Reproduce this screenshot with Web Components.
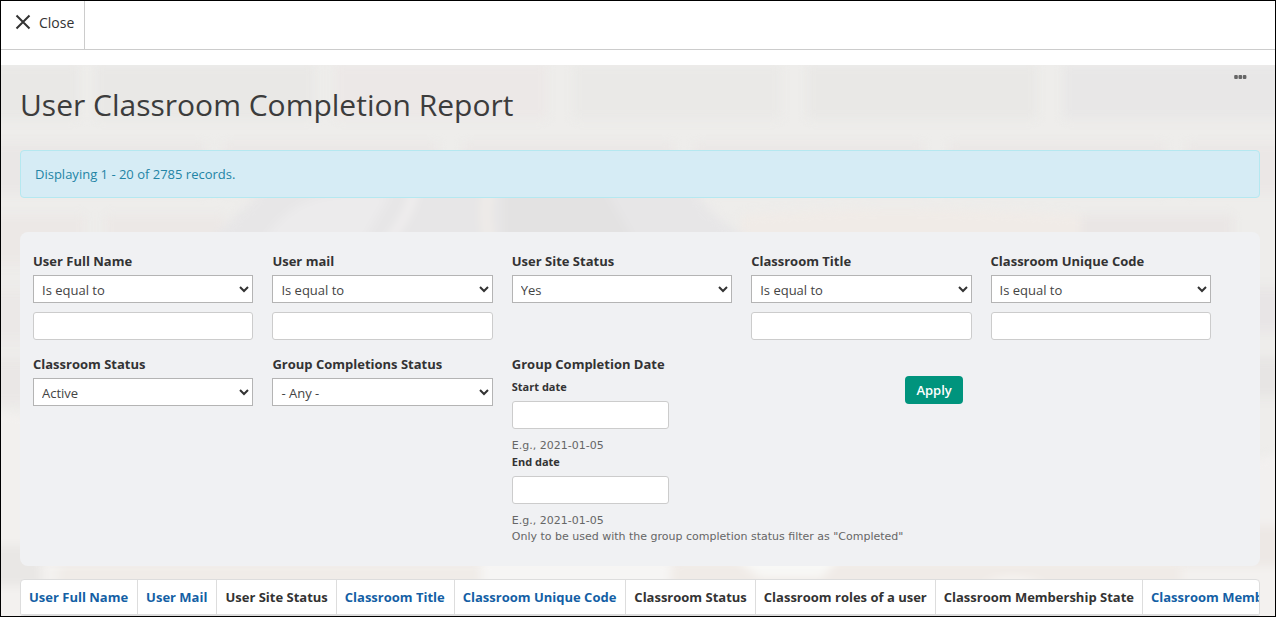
<!DOCTYPE html>
<html lang="en">
<head>
<meta charset="utf-8">
<title>User Classroom Completion Report</title>
<style>
    * { box-sizing: border-box; }

    body {
        margin: 0;
        min-height: 100vh;
        font: 13px/20px "Open Sans", "Liberation Sans", sans-serif;
        color: #333;
        background: #fff;
    }
</style>
</head>
<body>

<report-page>
    <close-bar slot="top"></close-bar>
    <report-menu slot="menu"></report-menu>
    <report-title>User Classroom Completion Report</report-title>
    <info-message>Displaying 1 - 20 of 2785 records.</info-message>
    <filter-panel>
        <filter-field label="User Full Name" options="Is equal to|Contains" text></filter-field>
        <filter-field label="User mail" options="Is equal to|Contains" text></filter-field>
        <filter-field label="User Site Status" options="Yes|No"></filter-field>
        <filter-field label="Classroom Title" options="Is equal to|Contains" text></filter-field>
        <filter-field label="Classroom Unique Code" options="Is equal to|Contains" text></filter-field>
        <filter-field label="Classroom Status" options="Active|Archived"></filter-field>
        <filter-field label="Group Completions Status" options="- Any -|Completed"></filter-field>
        <date-range label="Group Completion Date">Only to be used with the group completion status filter as "Completed"</date-range>
        <apply-button>Apply</apply-button>
    </filter-panel>
    <report-table></report-table>
</report-page>

<script>
// Base for all the elements: puts the markup in an open shadow root.
class BaseElement extends HTMLElement {
    constructor() {
        super();
        this.shadow = this.attachShadow({mode: 'open'});
    }

    connectedCallback() {
        this.shadow.innerHTML = `<style>* { box-sizing: border-box; }</style>` + this.render();
    }
}

// Page frame, with the faded photo behind the report.
class ReportPage extends BaseElement {
    render() {
        return `
        <style>
            :host {
                display: flex;
                flex-direction: column;
                height: 100vh;
                overflow: hidden;
                border: 1px solid #000;
            }

            main {
                position: relative;
                flex: 1;
                min-height: 0;
                margin-top: 15px;
                padding: 19px 15px 0 19px;
                overflow: hidden;
                background: #eeedeb;
                isolation: isolate;
            }

            .backdrop {
                position: absolute;
                inset: 0;
                width: 100%;
                height: 100%;
                z-index: -1;
            }

            .menu {
                position: absolute;
                top: 5px;
                right: 28px;
            }
        </style>
        <slot name="top"></slot>
        <main>
            <svg class="backdrop" viewBox="0 0 1274 550" preserveAspectRatio="none" aria-hidden="true">
                <defs>
                    <filter id="soft" x="-10%" y="-10%" width="120%" height="120%" color-interpolation-filters="sRGB">
                        <feGaussianBlur stdDeviation="5"/>
                    </filter>
                </defs>
                <g filter="url(#soft)">
                    <g fill="#e9e8e6">
                        <rect x="-20" y="0" width="98" height="54"/>
                        <rect x="94" y="0" width="220" height="54"/>
                        <rect x="334" y="0" width="212" height="54" fill="#ece8e7"/>
                        <rect x="572" y="0" width="208" height="54" fill="#eae9e7"/>
                        <rect x="806" y="0" width="230" height="54"/>
                        <rect x="1062" y="0" width="230" height="54" fill="#e8e7e7"/>
                        <rect x="-20" y="78" width="225" height="50" fill="#eae7e6"/>
                        <rect x="222" y="78" width="215" height="50" fill="#ebe7e6"/>
                        <rect x="462" y="78" width="210" height="50" fill="#ebe7e6"/>
                        <rect x="694" y="78" width="228" height="50" fill="#ebe7e6"/>
                        <rect x="948" y="78" width="216" height="50" fill="#ebe7e6"/>
                        <rect x="1186" y="78" width="110" height="50" fill="#ebe7e6"/>
                        <rect x="-20" y="150" width="104" height="50" fill="#ece8e6"/>
                        <rect x="104" y="150" width="120" height="50" fill="#ece8e6"/>
                        <rect x="1062" y="150" width="170" height="50" fill="#eae6e5"/>
                        <rect x="-20" y="225" width="60" height="50" fill="#ebe8e7"/>
                        <rect x="1180" y="222" width="110" height="44" fill="#e8e5e6"/>
                        <rect x="-20" y="294" width="60" height="44" fill="#eae7e6"/>
                        <rect x="1240" y="292" width="60" height="40" fill="#e7e5e4"/>
                    </g>
                    <path d="M740 150 C860 140 980 144 1080 150 V180 H740 Z" fill="#f0ebe7"/>
                    <path d="M205 180 C222 160 250 140 265 120 H690 C704 144 724 160 760 180 Z" fill="#e7e6e7"/>
                    <path d="M262 176 Q290 128 350 128 H390 L362 176 Z" fill="#ecebec"/>
                    <path d="M502 124 H604 L636 180 H502 Z" fill="#e3e2e2"/>
                    <path d="M490 120 Q480 146 490 180" stroke="#f0ece8" stroke-width="10" fill="none"/>
                    <path d="M414 120 Q412 146 384 180" stroke="#f2f0f0" stroke-width="7" fill="none"/>
                    <path d="M-20 344 L40 352 V570 H-20 Z" fill="#f2f0ee"/>
                    <path d="M1234 400 L1300 380 V570 H1234 Z" fill="#f2f0ef"/>
                    <rect x="-20" y="496" width="1320" height="74" fill="#f3f1ef"/>
                    <rect x="-20" y="480" width="60" height="40" fill="#e9e7e5"/>
                    <path d="M60 498 H480 V550 H50 Z" fill="#f0ece8"/>
                    <path d="M480 494 H670 L664 550 H480 Z" fill="#f6f5f4"/>
                    <path d="M672 494 H1180 V550 H668 Z" fill="#f0ebe7"/>
                    <path d="M734 494 H838 L820 512 H760 Z" fill="#f8f8f6"/>
                    <path d="M980 520 Q1010 502 1046 520 Z" fill="#f8f6f4"/>
                    <rect x="1180" y="460" width="110" height="40" fill="#ede8e5"/>
                </g>
            </svg>
            <div class="menu"><slot name="menu"></slot></div>
            <slot></slot>
        </main>
        `;
    }
}

class CloseBar extends BaseElement {
    render() {
        return `
        <style>
            :host {
                display: flex;
                height: 49px;
                flex: none;
                border-bottom: 1px solid #ccc;
                background: #fff;
            }

            button {
                display: flex;
                align-items: flex-start;
                gap: 8px;
                padding: 12px 10px 0 14px;
                border: 0;
                border-right: 1px solid #ccc;
                background: none;
                font: 14px/20px "Open Sans", sans-serif;
                color: #333;
                cursor: pointer;
            }

            svg {
                margin-top: 1px;
            }
        </style>
        <button type="button">
            <svg width="16" height="16" viewBox="0 0 16 16" fill="none" stroke="#333" stroke-width="2" aria-hidden="true">
                <path d="M1.5 1.5 L14.5 14.5 M14.5 1.5 L1.5 14.5"/>
            </svg>
            Close
        </button>
        `;
    }
}

class ReportMenu extends BaseElement {
    render() {
        return `
        <style>
            :host { display: block; }

            button {
                display: block;
                padding: 5px 0;
                border: 0;
                background: none;
                cursor: pointer;
            }

            svg { display: block; }
        </style>
        <button type="button" aria-label="Actions">
            <svg width="13" height="4" viewBox="0 0 13 4" fill="#666">
                <rect x="0.2" y="0" width="3.6" height="4" rx="1"/>
                <rect x="4.5" y="0" width="3.6" height="4" rx="1"/>
                <rect x="8.8" y="0" width="3.6" height="4" rx="1"/>
            </svg>
        </button>
        `;
    }
}

class ReportTitle extends BaseElement {
    render() {
        return `
        <style>
            :host { display: block; }

            h1 {
                margin: 0 0 24px;
                font-size: 30px;
                font-weight: 400;
                line-height: 42px;
                color: #3c3c3c;
            }
        </style>
        <h1><slot></slot></h1>
        `;
    }
}

class InfoMessage extends BaseElement {
    render() {
        return `
        <style>
            :host {
                display: block;
                margin-bottom: 34px;
                padding: 13px 14px;
                border: 1px solid #b5e8f0;
                border-radius: 4px;
                background: #d6ecf5;
                color: #2384a5;
            }
        </style>
        <slot></slot>
        `;
    }
}

class FilterPanel extends BaseElement {
    render() {
        return `
        <style>
            :host {
                display: block;
                margin-bottom: 13px;
                padding: 19px 30px 21px 13px;
                border-radius: 8px;
                background: #f0f1f3;
            }

            form {
                display: flex;
                flex-wrap: wrap;
                align-items: flex-start;
                row-gap: 14px;
            }
        </style>
        <form><slot></slot></form>
        `;
    }
}

class FilterField extends BaseElement {
    render() {
        const label = this.getAttribute('label');
        const options = this.getAttribute('options').split('|');

        return `
        <style>
            :host {
                display: block;
                flex: 0 0 20%;
                padding-right: 19px;
            }

            label {
                display: block;
                margin-bottom: 4px;
                font-weight: 700;
            }

            select, input {
                display: block;
                width: 100%;
                height: 28px;
                margin: 0;
                border: 1px solid #b4b4b4;
                border-radius: 0;
                background: #fff;
                font: inherit;
                color: #444;
            }

            select {
                appearance: none;
                padding: 2px 24px 0 8px;
            }

            input {
                margin-top: 9px;
                padding: 4px 6px;
                border-color: #ccc;
                border-radius: 3px;
            }

            .select {
                display: grid;
                align-items: center;
            }

            .select > * { grid-area: 1 / 1; }

            svg {
                justify-self: end;
                margin-right: 4px;
                pointer-events: none;
            }
        </style>
        <label for="operator">${label}</label>
        <div class="select">
            <select id="operator">${options.map((o) => `<option>${o}</option>`).join('')}</select>
            <svg width="10" height="8" viewBox="0 0 10 8" fill="none" stroke="#333" stroke-width="2" aria-hidden="true">
                <path d="M1 2 L5 6 L9 2"/>
            </svg>
        </div>
        ${this.hasAttribute('text') ? `<input type="text" aria-label="${label}">` : ''}
        `;
    }
}

class DateRange extends BaseElement {
    render() {
        return `
        <style>
            :host {
                display: block;
                margin-right: 2px;
            }

            fieldset {
                min-width: 0;
                margin: 0;
                padding: 0;
                border: 0;
            }

            legend {
                padding: 0;
                font-weight: 700;
            }

            label, .hint {
                display: block;
                font-size: 11px;
                line-height: 16px;
            }

            label { font-weight: 700; }

            legend + label { margin-top: 5px; }

            .hint {
                font-family: "DejaVu Sans", sans-serif;
                color: #666;
            }

            input {
                display: block;
                width: 157px;
                height: 28px;
                margin: 6px 0 9px;
                padding: 4px 6px;
                border: 1px solid #ccc;
                border-radius: 3px;
                background: #fff;
                font: inherit;
            }
        </style>
        <fieldset>
            <legend>${this.getAttribute('label')}</legend>
            <label for="start">Start date</label>
            <input id="start" type="text">
            <span class="hint">E.g., 2021-01-05</span>
            <label for="end">End date</label>
            <input id="end" type="text">
            <span class="hint">E.g., 2021-01-05</span>
            <span class="hint"><slot></slot></span>
        </fieldset>
        `;
    }
}

class ApplyButton extends BaseElement {
    render() {
        return `
        <style>
            :host {
                display: block;
                padding-top: 22px;
            }

            button {
                display: block;
                padding: 4px 11px;
                border: 0;
                border-radius: 4px;
                background: #00947d;
                font: inherit;
                font-weight: 600;
                color: #fff;
                cursor: pointer;
            }
        </style>
        <button type="button"><slot></slot></button>
        `;
    }
}

class ReportTable extends BaseElement {
    render() {
        // The sortable columns are links.
        const columns = [
            ['User Full Name', true],
            ['User Mail', true],
            ['User Site Status', false],
            ['Classroom Title', true],
            ['Classroom Unique Code', true],
            ['Classroom Status', false],
            ['Classroom roles of a user', false],
            ['Classroom Membership State', false],
            ['Classroom Membership Created', true]
        ];

        return `
        <style>
            :host {
                display: block;
                overflow: hidden;
                border: 1px solid #ddd;
                border-radius: 4px;
                background: #fff;
            }

            table {
                border-collapse: separate;
                border-spacing: 0;
            }

            th {
                padding: 7px 8px;
                border-right: 1px solid #ddd;
                border-bottom: 2px solid #ddd;
                text-align: left;
                white-space: nowrap;
            }

            a {
                padding-right: 1px;
                color: #145fa5;
                text-decoration: none;
            }
        </style>
        <table>
            <thead>
                <tr>${columns.map(([name, sortable]) => `<th scope="col">${sortable ? `<a href="#">${name}</a>` : name}</th>`).join('')}</tr>
            </thead>
        </table>
        `;
    }
}

customElements.define('report-page', ReportPage);
customElements.define('close-bar', CloseBar);
customElements.define('report-menu', ReportMenu);
customElements.define('report-title', ReportTitle);
customElements.define('info-message', InfoMessage);
customElements.define('filter-panel', FilterPanel);
customElements.define('filter-field', FilterField);
customElements.define('date-range', DateRange);
customElements.define('apply-button', ApplyButton);
customElements.define('report-table', ReportTable);
</script>
</body>
</html>
